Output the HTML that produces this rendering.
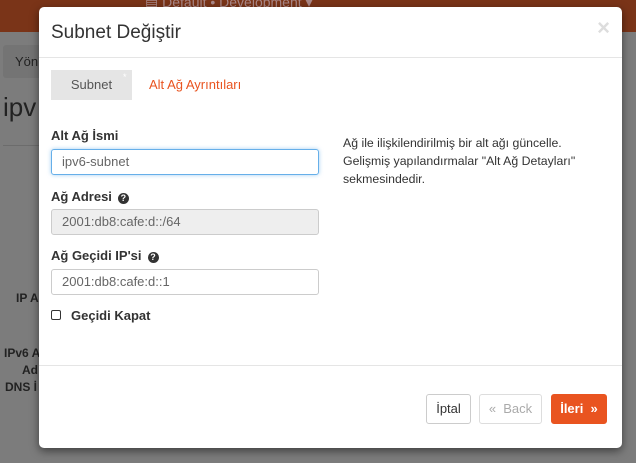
<!DOCTYPE html>
<html><head><meta charset="utf-8"><style>
body{margin:0;width:636px;height:463px;overflow:hidden;background:#7c7c7c;font-family:"Liberation Sans",sans-serif;position:relative}
.top{position:absolute;left:0;top:0;width:636px;height:32px;background:#7a3418}
.top span{position:absolute;left:145px;top:-6px;color:#a88;font-size:14px}
.bg{position:absolute;color:#222;font-weight:bold;font-size:12px}
.m{position:absolute;left:39px;top:7px;width:583px;height:441px;background:#fff;border-radius:5px;box-shadow:0 3px 9px rgba(0,0,0,.5)}
.hd{height:50px;border-bottom:1px solid #e5e5e5;position:relative}
.hd h4{margin:0;position:absolute;left:12px;top:15px;font-size:19px;font-weight:normal;color:#333}
.x{position:absolute;right:12px;top:8px;font-size:22px;color:#ddd;font-weight:bold}
.tab{position:absolute;left:12px;top:63px;width:81px;height:30px;background:#e5e5e5;color:#555;font-size:13px;line-height:30px;text-align:center}
.tab2{position:absolute;left:110px;top:63px;line-height:30px;font-size:13px;color:#e95420}
.lbl{position:absolute;left:12px;font-size:13px;font-weight:bold;color:#333}
.q{display:inline-block;width:11px;height:11px;border-radius:50%;background:#333;color:#fff;font-size:9px;line-height:11px;text-align:center;margin-left:6px;vertical-align:0}
.in{position:absolute;left:12px;width:268px;height:26px;box-sizing:border-box;border:1px solid #ccc;border-radius:3px;font-size:13px;color:#666;line-height:24px;padding-left:10px}
.help{position:absolute;left:304px;top:127px;font-size:12.3px;line-height:18px;color:#333}
.ft{position:absolute;left:0;top:358px;width:583px;border-top:1px solid #e5e5e5}
.b{position:absolute;top:387px;height:30px;line-height:28px;border:1px solid #ccc;border-radius:3px;font-size:13px;text-align:center;box-sizing:border-box}
</style></head><body>
<div class="top"><span>▤ Default • Development ▾</span></div>
<div style="position:absolute;left:3px;top:45px;width:60px;height:33px;background:#747474;border-radius:3px"></div>
<div style="position:absolute;left:15px;top:54px;font-size:13px;color:#222">Yön</div>
<div style="position:absolute;left:3px;top:92px;font-size:26px;color:#222">ipv</div>
<div style="position:absolute;left:3px;top:145px;width:36px;border-top:1px solid #6c6c6c"></div>
<div class="bg" style="left:16px;top:291px">IP A</div>
<div class="bg" style="left:4px;top:346px">IPv6 A</div>
<div class="bg" style="left:22px;top:363px">Ad</div>
<div class="bg" style="left:5px;top:380px">DNS İ</div>
<div class="m">
<div class="hd"><h4>Subnet Değiştir</h4><span class="x">×</span></div>
<div class="tab">Subnet<span style="position:absolute;left:72px;top:-8px;color:#fff;font-size:9px">*</span></div>
<div class="tab2">Alt Ağ Ayrıntıları</div>
<div class="lbl" style="top:121px">Alt Ağ İsmi</div>
<div class="in" style="top:142px;border-color:#66afe9;box-shadow:0 0 4px rgba(102,175,233,.6)">ipv6-subnet</div>
<div class="lbl" style="top:182px">Ağ Adresi<span class="q">?</span></div>
<div class="in" style="top:202px;background:#eee">2001:db8:cafe:d::/64</div>
<div class="lbl" style="top:241px">Ağ Geçidi IP'si<span class="q">?</span></div>
<div class="in" style="top:262px">2001:db8:cafe:d::1</div>
<div class="lbl" style="top:301px"><span style="display:inline-block;width:8px;height:8px;border:1px solid #333;border-radius:2px;margin-right:10px;vertical-align:0"></span>Geçidi Kapat</div>
<div class="help">Ağ ile ilişkilendirilmiş bir alt ağı güncelle.<br>Gelişmiş yapılandırmalar "Alt Ağ Detayları"<br>sekmesindedir.</div>
<div class="ft"></div>
<div class="b" style="left:387px;width:45px;color:#333">İptal</div>
<div class="b" style="left:440px;width:63px;color:#aaa;border-color:#ddd">«&nbsp; Back</div>
<div class="b" style="left:512px;width:56px;background:#e95420;border-color:#e95420;color:#fff;font-weight:bold">İleri &nbsp;»</div>
</div>
</body></html>
